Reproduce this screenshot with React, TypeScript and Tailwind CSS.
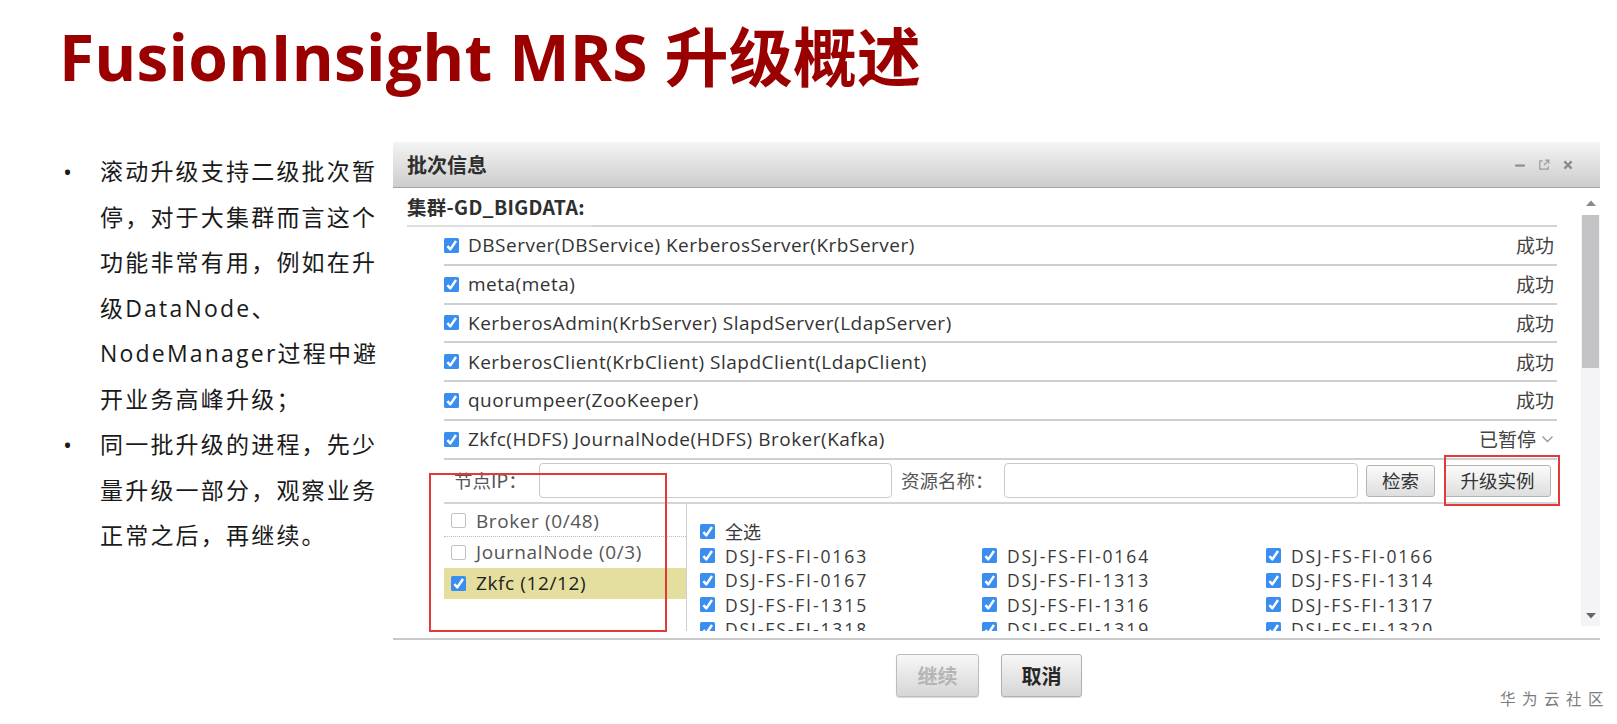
import React from "react";

function Check({ on = true }: { on?: boolean }) {
  if (!on)
    return <span className="block w-[15px] h-[15px] shrink-0 border border-[#c2c2c2] rounded-[2px] bg-white" />;
  return (
    <svg width="15" height="15" viewBox="0 0 14 14" className="shrink-0 block">
      <rect x="0" y="0" width="14" height="14" rx="1.5" fill="#3a8ef0" />
      <path d="M3.2 7.6 L5.9 10.6 L11.2 2.8" stroke="#ffffff" strokeWidth="2.3" fill="none" strokeLinejoin="round" />
    </svg>
  );
}

const rows = [
  { t: "DBServer(DBService) KerberosServer(KrbServer)", s: "成功" },
  { t: "meta(meta)", s: "成功" },
  { t: "KerberosAdmin(KrbServer) SlapdServer(LdapServer)", s: "成功" },
  { t: "KerberosClient(KrbClient) SlapdClient(LdapClient)", s: "成功" },
  { t: "quorumpeer(ZooKeeper)", s: "成功" },
];

const hosts = [
  "0163", "0164", "0166",
  "0167", "1313", "1314",
  "1315", "1316", "1317",
  "1318", "1319", "1320",
];

const bullet1 = [
  "滚动升级支持二级批次暂",
  "停，对于大集群而言这个",
  "功能非常有用，例如在升",
  "级DataNode、",
  "NodeManager过程中避",
  "开业务高峰升级；",
];
const bullet2 = ["同一批升级的进程，先少", "量升级一部分，观察业务", "正常之后，再继续。"];

function Bullet({ lines }: { lines: string[] }) {
  return (
    <div className="flex">
      <div className="w-[38px] shrink-0 pl-[1px] h-[45.5px] leading-[45.5px] text-[24px] tracking-normal">•</div>
      <div>
        {lines.map((l) => (
          <div key={l} className="h-[45.5px] leading-[45.5px] whitespace-nowrap">
            {l}
          </div>
        ))}
      </div>
    </div>
  );
}

export default function App() {
  return (
    <div className="relative w-[1617px] h-[724px] overflow-hidden bg-white font-['Open_Sans','Noto_Sans_CJK_SC',sans-serif]">
      {/* Title */}
      <div className="h-[142px] pt-[25px] pl-[59px]">
        <h1 className="text-[64px] leading-[64px] font-bold text-[#9a0000] whitespace-nowrap tracking-[0.2px]">
          FusionInsight MRS 升级概述
        </h1>
      </div>

      <div className="flex">
        {/* Left bullets */}
        <div className="w-[393px] shrink-0 pl-[62px] pt-[7px] text-[23px] tracking-[2.2px] text-[#1a1a1a]">
          <Bullet lines={bullet1} />
          <Bullet lines={bullet2} />
        </div>

        {/* Dialog */}
        <div className="w-[1207px] shrink-0">
          {/* header */}
          <div className="h-[46px] flex items-center justify-between pl-[14px] pr-[26px] bg-gradient-to-b from-[#f4f4f4] to-[#cdcdcd] border-b border-[#a3a3a3]">
            <span className="text-[20px] font-bold text-[#2e2e2e] font-['Noto_Sans_CJK_SC',sans-serif]">批次信息</span>
            <div className="flex items-center gap-[12px]">
              <svg width="12" height="12" viewBox="0 0 10 10">
                <path d="M1 5.5 H9" stroke="#8c8c8c" strokeWidth="1.8" />
              </svg>
              <svg width="12" height="12" viewBox="0 0 10 10">
                <path d="M4 1.5 H1.5 V8.5 H8.5 V6" stroke="#9a9a9a" strokeWidth="1" fill="none" />
                <path d="M5 5 L9 1 M6 1 H9 V4" stroke="#9a9a9a" strokeWidth="1" fill="none" />
              </svg>
              <svg width="12" height="12" viewBox="0 0 10 10">
                <path d="M2 2 L8 8 M8 2 L2 8" stroke="#8c8c8c" strokeWidth="1.9" />
              </svg>
            </div>
          </div>

          {/* body */}
          <div className="flex h-[452px] border-b-2 border-[#c9c9c9]">
            <div className="flex-1 pl-[14px] overflow-hidden text-[#333]">
              <div className="h-[39px] flex items-end">
                <div className="h-[39px] w-[185px] border-b-2 border-[#dedede] flex items-center text-[19.5px] font-bold tracking-[0.3px] font-['Noto_Sans_CJK_SC',sans-serif] text-[#2f2f2f]">
                  集群-GD_BIGDATA:
                </div>
              </div>
              <div className="ml-[37px] mr-[24px] -mt-[2px] border-t-2 border-[#d4d4d4] text-[19px] tracking-[0.5px]">
                {rows.map((r) => (
                  <div key={r.t} className="h-[38.8px] flex items-center justify-between border-b-2 border-[#cfcfcf]">
                    <div className="flex items-center gap-[9px]">
                      <Check />
                      <span>{r.t}</span>
                    </div>
                    <span className="font-['Noto_Sans_CJK_SC',sans-serif] text-[#444] pr-[3px] tracking-normal">{r.s}</span>
                  </div>
                ))}
                <div className="h-[38.8px] flex items-center justify-between border-b-2 border-[#cfcfcf]">
                  <div className="flex items-center gap-[9px]">
                    <Check />
                    <span>Zkfc(HDFS) JournalNode(HDFS) Broker(Kafka)</span>
                  </div>
                  <div className="flex items-center gap-[4px] font-['Noto_Sans_CJK_SC',sans-serif] text-[#444] tracking-normal pr-[2px]">
                    <span>已暂停</span>
                    <svg width="15" height="10" viewBox="0 0 14 10">
                      <path d="M2 2.5 L7 7.5 L12 2.5" stroke="#9a9a9a" strokeWidth="1.4" fill="none" />
                    </svg>
                  </div>
                </div>

                {/* filter row */}
                <div className="h-[44px] flex items-center border-b-2 border-[#d4d4d4] text-[18.5px] tracking-normal text-[#555] font-['Noto_Sans_CJK_SC',sans-serif]">
                  <span className="pl-[10px] w-[95px] shrink-0">节点IP：</span>
                  <div className="w-[353px] h-[35px] shrink-0 rounded-[4px] border border-[#cacaca] bg-white" />
                  <span className="ml-[9px] w-[103px] shrink-0">资源名称：</span>
                  <div className="w-[354px] h-[35px] shrink-0 rounded-[4px] border border-[#cacaca] bg-white" />
                  <div className="ml-[8px] w-[69px] h-[32px] shrink-0 rounded-[3px] border border-[#b4b4b4] bg-gradient-to-b from-[#fbfbfb] to-[#dedede] flex items-center justify-center text-[#333]">
                    检索
                  </div>
                  <div className="ml-[9px] w-[107px] h-[32px] shrink-0 rounded-[3px] border border-[#b4b4b4] bg-gradient-to-b from-[#fbfbfb] to-[#dedede] flex items-center justify-center text-[#333]">
                    升级实例
                  </div>
                </div>

                {/* split panel */}
                <div className="flex h-[127px] overflow-hidden">
                  <div className="w-[243px] shrink-0 border-r border-[#cfcfcf] pt-[2px] text-[19px] tracking-[0.6px]">
                    <div className="h-[31px] flex items-center gap-[10px] pl-[7px] border-b border-dotted border-[#bdbdbd] text-[#555]">
                      <Check on={false} />
                      <span>Broker (0/48)</span>
                    </div>
                    <div className="h-[31px] flex items-center gap-[10px] pl-[7px] text-[#555]">
                      <Check on={false} />
                      <span>JournalNode (0/3)</span>
                    </div>
                    <div className="h-[31px] flex items-center gap-[10px] pl-[7px] bg-[#e5df9f] text-[#222]">
                      <Check />
                      <span>Zkfc (12/12)</span>
                    </div>
                  </div>
                  <div className="flex-1 pl-[13px] pt-[16px] text-[17.5px] tracking-[1.9px] text-[#3a3a3a]">
                    <div className="h-[24px] flex items-center gap-[10px] font-['Noto_Sans_CJK_SC',sans-serif] tracking-normal text-[18px]">
                      <Check />
                      <span>全选</span>
                    </div>
                    <div className="grid grid-cols-[282px_284px_200px]">
                      {hosts.map((h) => (
                        <div key={h} className="h-[24.4px] flex items-center gap-[10px]">
                          <Check />
                          <span>DSJ-FS-FI-{h}</span>
                        </div>
                      ))}
                    </div>
                  </div>
                </div>
              </div>
            </div>

            {/* scrollbar */}
            <div className="w-[19px] shrink-0 mt-[3px] mb-[12px] bg-[#f4f3f5] flex flex-col items-center">
              <div className="h-[24px] w-full flex items-center justify-center bg-white">
                <svg width="12" height="8" viewBox="0 0 12 8">
                  <path d="M1 7 L6 1.5 L11 7 Z" fill="#8a8a8a" />
                </svg>
              </div>
              <div className="w-[17px] h-[153px] bg-[#c3c3c5]" />
              <div className="flex-1" />
              <div className="h-[20px] w-full flex items-center justify-center">
                <svg width="12" height="8" viewBox="0 0 12 8">
                  <path d="M1 1 L6 6.5 L11 1 Z" fill="#666" />
                </svg>
              </div>
            </div>
          </div>

          {/* buttons */}
          <div className="flex justify-center gap-[22px] pr-[15px] mt-[14px] font-['Noto_Sans_CJK_SC',sans-serif]">
            <div className="w-[83px] h-[43px] rounded-[3px] border border-[#bcbcbc] bg-gradient-to-b from-[#f7f7f7] to-[#d6d6d6] shadow-[0_1px_1px_rgba(0,0,0,0.15)] flex items-center justify-center text-[20px] font-bold text-[#b4b4b4]">
              继续
            </div>
            <div className="w-[81px] h-[43px] rounded-[3px] border border-[#b0b0b0] bg-gradient-to-b from-[#f7f7f7] to-[#d6d6d6] shadow-[0_1px_1px_rgba(0,0,0,0.15)] flex items-center justify-center text-[20px] font-bold text-[#262626]">
              取消
            </div>
          </div>
        </div>
      </div>

      {/* red highlight boxes */}
      <div className="absolute left-[429px] top-[473px] w-[238px] h-[159px] border-2 border-[#e23a3a]" />
      <div className="absolute left-[1444px] top-[455px] w-[116px] h-[51px] border-2 border-[#e23a3a]" />

      {/* watermark */}
      <div className="absolute left-[1500px] top-[687px] text-[15.5px] tracking-[6.5px] text-[#7c7c7c] font-['Noto_Sans_CJK_SC',sans-serif]">
        华为云社区
      </div>
    </div>
  );
}
